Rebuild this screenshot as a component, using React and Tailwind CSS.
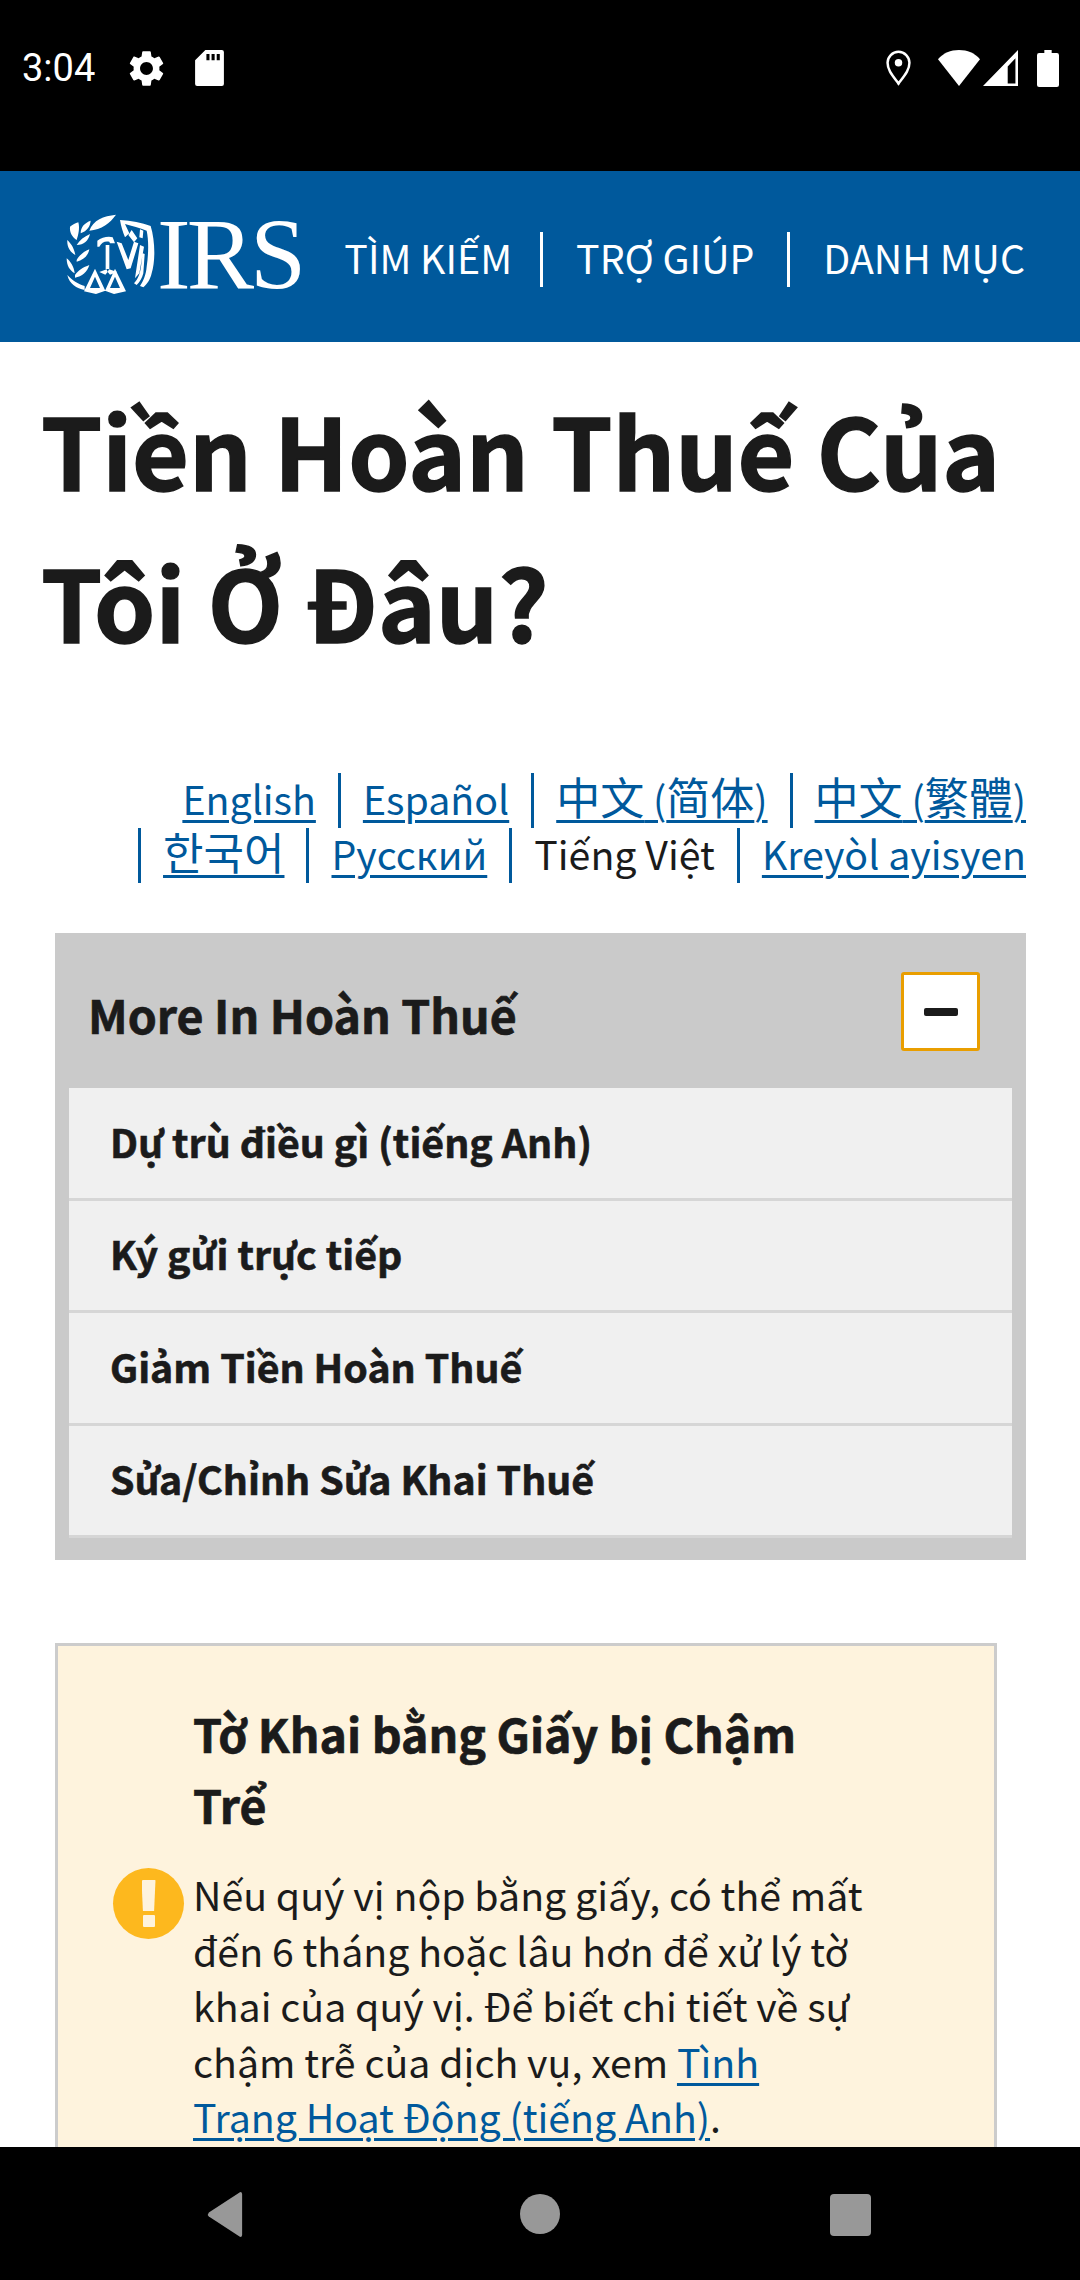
const font = { fontFamily: '"Noto Sans CJK SC", "Noto Sans CJK KR", sans-serif' };

const GearIcon = () => (
  <svg viewBox="0 0 24 24" className="w-[43px] h-[43px] fill-white">
    <path d="M19.14 12.94c.04-.3.06-.61.06-.94 0-.32-.02-.64-.07-.94l2.03-1.58a.49.49 0 0 0 .12-.61l-1.92-3.32a.488.488 0 0 0-.59-.22l-2.39.96c-.5-.38-1.03-.7-1.62-.94l-.36-2.54a.484.484 0 0 0-.48-.41h-3.84c-.24 0-.43.17-.47.41l-.36 2.54c-.59.24-1.13.57-1.62.94l-2.39-.96c-.22-.08-.47 0-.59.22L2.74 8.87c-.12.21-.08.47.12.61l2.03 1.58c-.05.3-.09.63-.09.94s.02.64.07.94l-2.03 1.58a.49.49 0 0 0-.12.61l1.92 3.32c.12.22.37.29.59.22l2.39-.96c.5.38 1.03.7 1.62.94l.36 2.54c.05.24.24.41.48.41h3.84c.24 0 .44-.17.47-.41l.36-2.54c.59-.24 1.13-.56 1.62-.94l2.39.96c.22.08.47 0 .59-.22l1.92-3.32c.12-.22.07-.47-.12-.61l-2.01-1.58zM12 15.6c-1.98 0-3.6-1.62-3.6-3.6s1.62-3.6 3.6-3.6 3.6 1.62 3.6 3.6-1.62 3.6-3.6 3.6z" />
  </svg>
);

const SdIcon = () => (
  <svg viewBox="0 0 28 35" className="w-[29px] h-[36px] fill-white">
    <path fillRule="evenodd" d="M10 0h16a2 2 0 0 1 2 2v31a2 2 0 0 1-2 2H2a2 2 0 0 1-2-2V10zM11 4v6h3V4zM16 4v6h3V4zM21 4v6h3V4z" />
  </svg>
);

const StatusBar = () => (
  <div className="h-[171px] bg-black text-white flex items-start justify-between pt-[48px] pl-[22px] pr-[21px] shrink-0">
    <div className="flex items-center h-[40px]">
      <span className="text-[38px] leading-[40px] w-[103px]" style={{ fontFamily: "Roboto, sans-serif" }}>3:04</span>
      <GearIcon />
      <div className="w-[27px]" />
      <SdIcon />
    </div>
    <div className="flex items-center h-[40px]">
      <svg viewBox="0 0 24 34" className="w-[25px] h-[36px] mr-[27px]" fill="none" stroke="white" strokeWidth="2.4">
        <path d="M12 32C6 24 1.500 19 1.500 12a10.500 10.500 0 0 1 21 0C22.500 19 18 24 12 32z" />
        <circle cx="12" cy="12" r="3.6" fill="white" stroke="none" />
      </svg>
      <svg viewBox="0 0 40 35" className="w-[42px] h-[36px] fill-white" preserveAspectRatio="none">
        <path d="M20 35 0 9C5 3 12 0 20 0s15 3 20 9z" />
      </svg>
      <svg viewBox="0 0 34 35" className="w-[35px] h-[36px] ml-[3px] mr-[19px] fill-white" preserveAspectRatio="none">
        <path fillRule="evenodd" d="M34 0v35H0zM31.500 8 24 16v16.500h7.500z" />
      </svg>
      <svg viewBox="0 0 21 36" className="w-[22px] h-[37px] fill-white" preserveAspectRatio="none">
        <path d="M7 0h7v3h5a2 2 0 0 1 2 2v29a2 2 0 0 1-2 2H2a2 2 0 0 1-2-2V5a2 2 0 0 1 2-2h5z" />
      </svg>
    </div>
  </div>
);

const Seal = () => (
  <svg viewBox="0 0 300 270" className="w-[100px] h-[90px] shrink-0" fill="white">
    {/* laurel */}
    <path d="M88 62C100 30 130 18 168 14 150 40 125 58 88 62zM62 70C62 50 75 38 92 32 90 50 82 62 62 70zM30 50C38 44 46 40 55 37 60 55 55 75 50 90 38 82 28 68 30 50z" />
    <path d="M50 105C60 90 72 80 90 72 85 92 72 105 50 105zM22 90C32 100 42 112 46 135 32 128 20 112 22 90zM50 150C58 135 72 125 88 118 84 138 70 150 50 155zM20 145C32 155 42 170 44 190 30 182 20 168 20 145zM45 195C55 180 70 172 88 165 82 185 66 200 45 203zM22 195C35 210 55 222 74 228L74 240C50 235 28 222 22 195z" />
    {/* eagle head and post */}
    <path d="M112 92C125 82 145 78 158 82L165 100 150 100 148 95C135 92 125 97 118 110L112 110z" />
    <path d="M137 105h11v72h-11zM118 186 140 178 143 186 147 178 172 186 150 194 143 186 136 194z" />
    {/* scales */}
    <path fillRule="evenodd" d="M105 176 136 242 108 252 72 244zM105 200 90 234 120 234zM165 176 198 244 162 252 135 242zM165 200 150 234 180 234z" />
    {/* wing */}
    <path d="M180 30C215 32 245 38 272 48 285 90 287 150 275 190 270 210 262 222 250 232L240 228C250 212 258 195 260 170 266 130 266 90 260 62 240 54 215 48 195 42L208 70 195 82C188 65 183 48 180 30z" />
    <path d="M215 60 232 85 222 97 205 75zM240 58 250 62 248 85 238 82zM170 95 185 100 205 150 222 95 235 100 212 175 200 178zM240 105 252 110 238 190 225 205zM248 130 254 132 250 190C246 205 240 215 230 225L222 220C235 205 240 190 243 170z" />
  </svg>
);

const Header = () => (
  <div className="h-[171px] bg-[#00599c] flex items-center justify-between pl-[60px] pr-[55px] shrink-0">
    <div className="flex items-center -mt-[4px]">
      <Seal />
      <span className="text-white text-[101px] leading-[90px] tracking-[-4px] -ml-[3px]" style={{ fontFamily: '"Liberation Serif", serif' }}>IRS</span>
    </div>
    <div className="flex items-center whitespace-nowrap text-white text-[39.300px] leading-[49px] mt-[6px]" style={font}>
      <a className="h-[55px] pr-[28px] border-r-[3px] border-white">TÌM KIẾM</a>
      <a className="h-[55px] pl-[33px] pr-[33px] border-r-[3px] border-white">TRỢ GIÚP</a>
      <a className="h-[55px] pl-[33px]">DANH MỤC</a>
    </div>
  </div>
);

const Cjk = ({ children }) => <span className="text-[44px]">{children}</span>;

const langs1 = [
  { k: "en", t: "English" },
  { k: "es", t: "Español" },
  { k: "sc", t: <><Cjk>中文</Cjk> (<Cjk>简体</Cjk>)</> },
  { k: "tc", t: <><Cjk>中文</Cjk> (<Cjk>繁體</Cjk>)</>, last: true },
];
const langs2 = [
  { k: "ko", t: <Cjk>한국어</Cjk> },
  { k: "ru", t: "Русский" },
  { k: "vi", t: "Tiếng Việt", plain: true },
  { k: "ht", t: "Kreyòl ayisyen", last: true },
];

const LangRow = ({ items, lead }) => (
  <div className="flex justify-end items-center whitespace-nowrap h-[55px]">
    {lead && <div className="w-[3px] h-[55px] bg-[#00599c] mr-[22px]" />}
    {items.map((l) => (
      <div key={l.k} className="flex items-center">
        <div className="pb-[7px]">
          {l.plain ? (
            <span className="text-[#1b1b1b]">{l.t}</span>
          ) : (
            <a className="text-[#00599c] underline decoration-[3px] underline-offset-[5px]">{l.t}</a>
          )}
        </div>
        {!l.last && <div className="w-[3px] h-[55px] bg-[#00599c] mx-[22px]" />}
      </div>
    ))}
  </div>
);

const items = ["Dự trù điều gì (tiếng Anh)", "Ký gửi trực tiếp", "Giảm Tiền Hoàn Thuế", "Sửa/Chỉnh Sửa Khai Thuế"];

const App = () => (
  <div className="w-[1080px] h-[2280px] flex flex-col overflow-hidden bg-white text-[#1b1b1b]" style={font}>
    <StatusBar />
    <Header />
    <div className="flex-1 overflow-hidden">
      <h1 className="text-[98px] leading-[152px] font-bold [-webkit-text-stroke:1.5px] pl-[41px] pr-[20px] pt-[30px]">Tiền Hoàn Thuế Của Tôi Ở Đâu?</h1>

      <div className="mt-[97px] pr-[54px] text-[39.300px] leading-[55px]">
        <LangRow items={langs1} />
        <LangRow items={langs2} lead />
      </div>

      {/* More in */}
      <div className="ml-[55px] mr-[54px] mt-[50px] bg-[#cacaca] px-[14px] pb-[22px]">
        <div className="h-[155px] flex items-center justify-between pl-[19px] pr-[32px]">
          <span className="text-[46.500px] font-bold [-webkit-text-stroke:0.7px] mt-[6px]">More In Hoàn Thuế</span>
          <button className="w-[79px] h-[79px] mt-[2px] bg-white border-[3px] border-[#e99e00] rounded-[3px] flex items-center justify-center">
            <span className="block w-[34px] h-[8px] rounded-[2px] bg-[#1b1b1b]" />
          </button>
        </div>
        <div className="bg-[#f0f0f0]">
          {items.map((it) => (
            <div key={it} className="h-[112.500px] flex items-center pl-[41px] pb-[3px] text-[39.300px] font-bold [-webkit-text-stroke:0.6px] border-b-[3px] border-[#d6d6d6]">{it}</div>
          ))}
        </div>
      </div>

      {/* Alert */}
      <div className="ml-[55px] w-[942px] mt-[83px] bg-[#fef3dd] border-[3px] border-[#cccccc] pl-[55px] pr-[125px] pt-[51px] pb-[60px] flex">
        <div className="w-[80px] shrink-0 pt-[171px]">
          <div className="w-[71px] h-[71px] rounded-full bg-[#fdb81e] flex flex-col items-center pt-[12px] gap-[4px]">
            <div className="w-[14px] h-[31px] bg-[#fef3dd] rounded-[1px]" style={{ clipPath: "polygon(0 0,100% 0,90% 100%,10% 100%)" }} />
            <div className="w-[12px] h-[12px] bg-[#fef3dd] rounded-[1px]" />
          </div>
        </div>
        <div>
          <h3 className="text-[46.500px] leading-[71px] font-bold [-webkit-text-stroke:0.7px]">Tờ Khai bằng Giấy bị Chậm Trể</h3>
          <p className="text-[39.300px] leading-[55.500px] mt-[27px]">
            Nếu quý vị nộp bằng giấy, có thể mất đến 6 tháng hoặc lâu hơn để xử lý tờ khai của quý vị. Để biết chi tiết về sự chậm trễ của dịch vụ, xem{" "}
            <a className="text-[#00599c] underline decoration-[3px] underline-offset-[5px]">Tình Trạng Hoạt Động (tiếng Anh)</a>.
          </p>
        </div>
      </div>
    </div>

    {/* nav bar */}
    <div className="h-[133px] bg-black shrink-0 flex items-start pt-[45px]">
      <svg viewBox="0 0 20 44" className="w-[37px] h-[45px] ml-[207px]" preserveAspectRatio="none" fill="#989898">
        <path d="M18 0q1 0 1 2v40q0 2-1 2L1 24q-1-2 0-4z" />
      </svg>
      <div className="w-[40px] h-[40px] rounded-full bg-[#989898] ml-[276px] mt-[2px]" />
      <div className="w-[41px] h-[42px] rounded-[4px] bg-[#989898] ml-[270px] mt-[2px]" />
    </div>
  </div>
);

export default App;
